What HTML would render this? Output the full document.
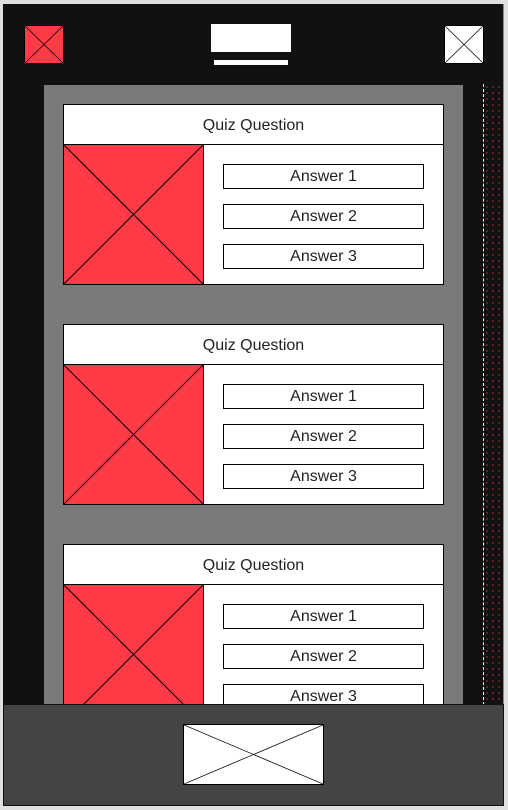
<!DOCTYPE html>
<html><head><style>
*{margin:0;padding:0;box-sizing:border-box}
body{width:508px;height:810px;background:#e0e0e0;position:relative;overflow:hidden;font-family:"Liberation Sans",sans-serif}
.a{position:absolute}
.frame{left:3px;top:4px;width:501px;height:802px;background:#111;border-right:1px solid #888}
.x{position:absolute;border:1px solid #000}
.x svg{width:100%;height:100%;display:block}
.card{position:absolute;left:63px;width:381px;height:181px;background:#fff;border:1px solid #000}
.q{height:40px;border-bottom:1px solid #000;text-align:center;line-height:41px;font-size:16px;color:#222}
.img{position:absolute;left:-1px;top:39px;width:141px;height:141px;background:#ff3b47;border:1px solid #000}
.ans{position:absolute;left:159px;width:201px;height:25px;border:1px solid #000;text-align:center;line-height:24px;font-size:16px;color:#222;background:#fff}
</style></head><body>
<div class="a frame"></div>
<div class="x" style="left:24px;top:25px;width:40px;height:39px;background:#ff3b47"><svg viewBox="0 0 10 10" preserveAspectRatio="none"><path d="M0 0L10 10M10 0L0 10" stroke="#000" stroke-width=".2"/></svg></div>
<div class="a" style="left:211px;top:24px;width:80px;height:28px;background:#fff"></div>
<div class="a" style="left:214px;top:60px;width:74px;height:5px;background:#fff"></div>
<div class="x" style="left:444px;top:25px;width:40px;height:39px;background:#fff"><svg viewBox="0 0 10 10" preserveAspectRatio="none"><path d="M0 0L10 10M10 0L0 10" stroke="#000" stroke-width=".2"/></svg></div>
<div class="a" style="left:44px;top:85px;width:419px;height:620px;background:#7a7a7a;overflow:hidden">
</div>
<div class="a" style="left:483px;top:84px;width:20px;height:621px;border-left:1px dashed #fff;background-color:#111;background-image:radial-gradient(#e0203a 0.6px,transparent 0.9px);background-size:6px 6px"></div>
<div class="a" style="left:0;top:0;width:508px;height:704px;overflow:hidden">
<div class="card" style="top:104px"><div class="q">Quiz Question</div><div class="img"><svg viewBox="0 0 10 10" preserveAspectRatio="none" width="100%" height="100%"><path d="M0 0L10 10M10 0L0 10" stroke="#000" stroke-width=".07"/></svg></div><div class="ans" style="top:59px">Answer 1</div><div class="ans" style="top:99px">Answer 2</div><div class="ans" style="top:139px">Answer 3</div></div>
<div class="card" style="top:324px"><div class="q">Quiz Question</div><div class="img"><svg viewBox="0 0 10 10" preserveAspectRatio="none" width="100%" height="100%"><path d="M0 0L10 10M10 0L0 10" stroke="#000" stroke-width=".07"/></svg></div><div class="ans" style="top:59px">Answer 1</div><div class="ans" style="top:99px">Answer 2</div><div class="ans" style="top:139px">Answer 3</div></div>
<div class="card" style="top:544px"><div class="q">Quiz Question</div><div class="img"><svg viewBox="0 0 10 10" preserveAspectRatio="none" width="100%" height="100%"><path d="M0 0L10 10M10 0L0 10" stroke="#000" stroke-width=".07"/></svg></div><div class="ans" style="top:59px">Answer 1</div><div class="ans" style="top:99px">Answer 2</div><div class="ans" style="top:139px">Answer 3</div></div>
</div>
<div class="a" style="left:3px;top:704px;width:501px;height:102px;background:#444;border:1px solid #111"></div>
<div class="x" style="left:183px;top:724px;width:141px;height:61px;background:#fff"><svg viewBox="0 0 10 10" preserveAspectRatio="none"><path d="M0 0L10 10M10 0L0 10" stroke="#000" stroke-width=".1"/></svg></div>
</body></html>
